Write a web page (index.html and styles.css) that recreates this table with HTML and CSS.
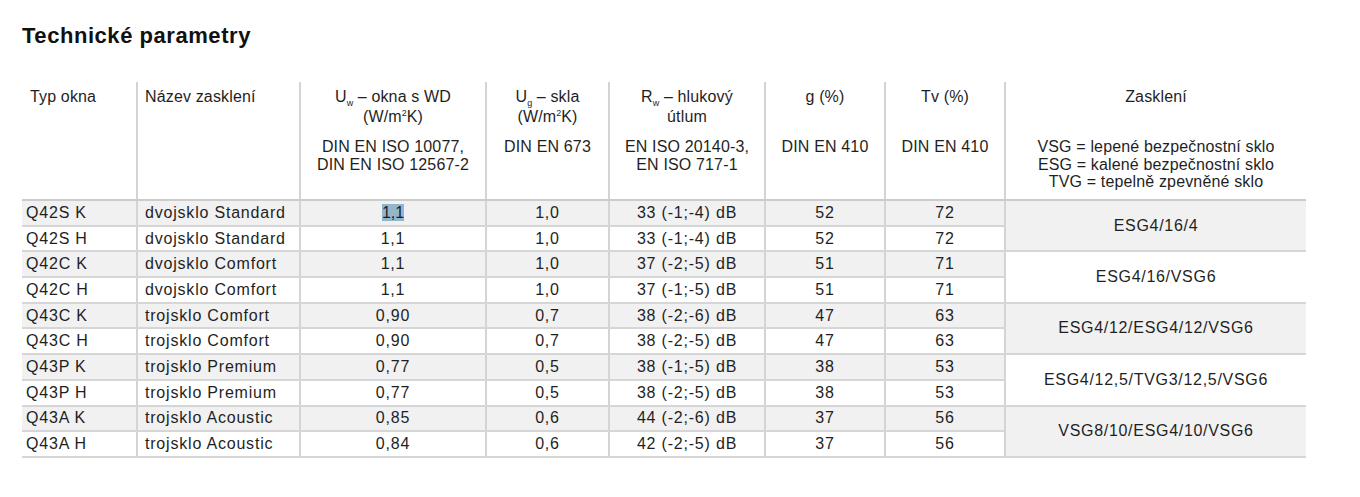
FILE: index.html
```html
<!DOCTYPE html>
<html lang="cs">
<head>
<meta charset="utf-8">
<title>Technické parametry</title>
<link rel="stylesheet" href="styles.css">
</head>
<body>
<h2 class="title">Technické parametry</h2>
<table class="params">
  <colgroup>
    <col class="c1"><col class="c2"><col class="c3"><col class="c4"><col class="c5"><col class="c6"><col class="c7"><col class="c8">
  </colgroup>
  <thead>
    <tr>
      <th class="left first"><div class="h-title">Typ okna</div></th>
      <th class="left second"><div class="h-title">Název zasklení</div></th>
      <th><div class="h-title">U<sub>w</sub> – okna s WD<br>(W/m<sup>2</sup>K)</div><div class="h-norm">DIN EN ISO 10077,<br>DIN EN ISO 12567-2</div></th>
      <th><div class="h-title">U<sub>g</sub> – skla<br>(W/m<sup>2</sup>K)</div><div class="h-norm">DIN EN 673</div></th>
      <th><div class="h-title">R<sub>w</sub> – hlukový<br>útlum</div><div class="h-norm">EN ISO 20140-3,<br>EN ISO 717-1</div></th>
      <th><div class="h-title">g (%)</div><div class="h-norm">DIN EN 410</div></th>
      <th><div class="h-title">Tv (%)</div><div class="h-norm">DIN EN 410</div></th>
      <th class="last"><div class="h-title">Zasklení</div><div class="h-norm">VSG = lepené bezpečnostní sklo<br>ESG = kalené bezpečnostní sklo<br>TVG = tepelně zpevněné sklo</div></th>
    </tr>
  </thead>
  <tbody>
    <tr class="shade">
      <td class="left first">Q42S K</td><td class="left">dvojsklo Standard</td><td><span class="sel">1,1</span></td><td>1,0</td><td>33 (-1;-4) dB</td><td>52</td><td>72</td>
      <td class="last" rowspan="2">ESG4/16/4</td>
    </tr>
    <tr>
      <td class="left first">Q42S H</td><td class="left">dvojsklo Standard</td><td>1,1</td><td>1,0</td><td>33 (-1;-4) dB</td><td>52</td><td>72</td>
    </tr>
    <tr class="shade">
      <td class="left first">Q42C K</td><td class="left">dvojsklo Comfort</td><td>1,1</td><td>1,0</td><td>37 (-2;-5) dB</td><td>51</td><td>71</td>
      <td class="last plain" rowspan="2">ESG4/16/VSG6</td>
    </tr>
    <tr>
      <td class="left first">Q42C H</td><td class="left">dvojsklo Comfort</td><td>1,1</td><td>1,0</td><td>37 (-1;-5) dB</td><td>51</td><td>71</td>
    </tr>
    <tr class="shade">
      <td class="left first">Q43C K</td><td class="left">trojsklo Comfort</td><td>0,90</td><td>0,7</td><td>38 (-2;-6) dB</td><td>47</td><td>63</td>
      <td class="last" rowspan="2">ESG4/12/ESG4/12/VSG6</td>
    </tr>
    <tr>
      <td class="left first">Q43C H</td><td class="left">trojsklo Comfort</td><td>0,90</td><td>0,7</td><td>38 (-2;-5) dB</td><td>47</td><td>63</td>
    </tr>
    <tr class="shade">
      <td class="left first">Q43P K</td><td class="left">trojsklo Premium</td><td>0,77</td><td>0,5</td><td>38 (-1;-5) dB</td><td>38</td><td>53</td>
      <td class="last plain" rowspan="2">ESG4/12,5/TVG3/12,5/VSG6</td>
    </tr>
    <tr>
      <td class="left first">Q43P H</td><td class="left">trojsklo Premium</td><td>0,77</td><td>0,5</td><td>38 (-2;-5) dB</td><td>38</td><td>53</td>
    </tr>
    <tr class="shade">
      <td class="left first">Q43A K</td><td class="left">trojsklo Acoustic</td><td>0,85</td><td>0,6</td><td>44 (-2;-6) dB</td><td>37</td><td>56</td>
      <td class="last" rowspan="2">VSG8/10/ESG4/10/VSG6</td>
    </tr>
    <tr>
      <td class="left first">Q43A H</td><td class="left">trojsklo Acoustic</td><td>0,84</td><td>0,6</td><td>42 (-2;-5) dB</td><td>37</td><td>56</td>
    </tr>
  </tbody>
</table>
</body>
</html>
```

FILE: styles.css
```css
html, body {
  margin: 0;
  padding: 0;
  background: #ffffff;
}

body {
  font-family: "Liberation Sans", Arial, sans-serif;
  color: #1f1f1f;
}

.title {
  margin: 23px 0 0 22px;
  font-size: 22px;
  line-height: 26px;
  font-weight: bold;
  letter-spacing: 0.55px;
  color: #111111;
}

.params {
  margin: 33px 0 0 22px;
  width: 1284px;
  table-layout: fixed;
  border-collapse: collapse;
  font-size: 16px;
}

.c1 { width: 115px; }
.c2 { width: 163px; }
.c3 { width: 186px; }
.c4 { width: 123px; }
.c5 { width: 156px; }
.c6 { width: 120px; }
.c7 { width: 120px; }
.c8 { width: 301px; }

.params th {
  height: 118px;
  padding: 5px 0 0 0;
  box-sizing: border-box;
  vertical-align: top;
  font-weight: normal;
  text-align: center;
  letter-spacing: 0.15px;
  border-left: 2px solid #d4d4d4;
  border-bottom: 2px solid #cccccc;
}

.params th.first {
  border-left: none;
  padding-left: 8px;
}

.params th.second {
  padding-left: 7px;
}

.h-title {
  height: 51px;
  line-height: 20px;
}

.h-norm {
  line-height: 17.5px;
}

.params sub {
  font-size: 9px;
  vertical-align: -4px;
  line-height: 0;
  letter-spacing: 0;
}

.params sup {
  font-size: 9px;
  vertical-align: 6px;
  line-height: 0;
  letter-spacing: 0;
}

.params td {
  height: 23.7px;
  padding: 0;
  line-height: 18px;
  text-align: center;
  vertical-align: middle;
  letter-spacing: 0.8px;
  border-left: 2px solid #d4d4d4;
  border-bottom: 2px solid #d6d6d6;
}

.params td.first {
  border-left: none;
  padding-left: 4px;
}

.params td.left,
.params th.left {
  text-align: left;
}

.params td.left:not(.first) {
  padding-left: 7px;
}

.params tr.shade td {
  background: #f1f1f1;
}

.params tr.shade td.plain {
  background: #ffffff;
}

.params td.last {
  background: #f1f1f1;
  letter-spacing: 0.7px;
}

.params td.last.plain {
  background: #ffffff;
}

.sel {
  background: #93b6cc;
  letter-spacing: 0;
  padding: 0;
}
```
